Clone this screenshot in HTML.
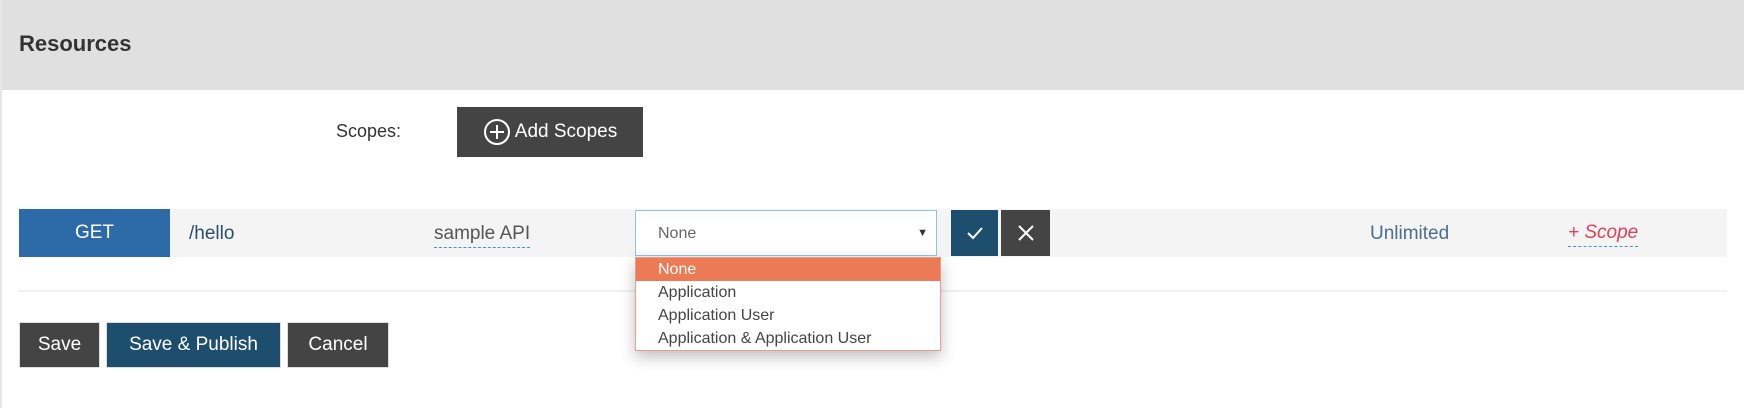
<!DOCTYPE html>
<html><head><style>
*{box-sizing:border-box;margin:0;padding:0}
body{width:1744px;height:408px;background:#fff;font-family:"Liberation Sans",sans-serif;position:relative;overflow:hidden}
.a{position:absolute}
.hdr{left:0;top:0;width:1744px;height:90px;background:#e0e0e0}
.btn{position:absolute;color:#fff;font-size:19px;display:flex;align-items:center;justify-content:center;border:1px solid #ddd}
.dark{background:#444}
.navy{background:#1d4e6e}
.dd div{height:23px;line-height:23px;padding-left:22px;font-size:16px;color:#444}
</style></head><body>
<div class="a hdr"></div>
<div class="a" style="left:0;top:0;width:2px;height:408px;background:#e6e6e6"></div>
<div class="a" style="left:19px;top:31px;font-size:22px;font-weight:bold;color:#333">Resources</div>
<div class="a" style="left:336px;top:121px;font-size:18px;color:#333">Scopes:</div>
<div class="btn dark" style="left:457px;top:107px;width:186px;height:50px;border:none"><svg width="28" height="28" viewBox="0 0 28 28" style="margin-right:4px"><circle cx="14" cy="14" r="12" fill="none" stroke="#fff" stroke-width="2"/><path d="M14 7v14M7 14h14" stroke="#fff" stroke-width="2"/></svg>Add Scopes</div>
<div class="a" style="left:19px;top:209px;width:1708px;height:48px;background:#f4f4f4"></div>
<div class="btn" style="left:19px;top:209px;width:151px;height:48px;background:#2d6aa8;border:none">GET</div>
<div class="a" style="left:189px;top:223px;font-size:19px;color:#2a4e6e">/hello</div>
<div class="a" style="left:434px;top:223px;font-size:19px;color:#555;border-bottom:1px dashed #4a90c8;padding-bottom:2px">sample API</div>
<div class="a" style="left:635px;top:210px;width:302px;height:46px;background:#fff;border:1px solid #8ec3ea;font-size:16px;color:#666;padding:14px 0 0 22px">None<span style="position:absolute;right:8px;top:16px;font-size:11px;color:#333">▼</span></div>
<div class="btn navy" style="left:951px;top:210px;width:47px;height:46px;border:none"><svg width="20" height="20" viewBox="0 0 20 20"><path d="M3 10l5 5 9-10" fill="none" stroke="#fff" stroke-width="2"/></svg></div>
<div class="btn dark" style="left:1001px;top:210px;width:49px;height:46px;border:none"><svg width="20" height="20" viewBox="0 0 20 20"><path d="M3 3l14 14M17 3L3 17" stroke="#fff" stroke-width="2"/></svg></div>
<div class="a" style="left:1370px;top:223px;font-size:19px;color:#4a6f8e">Unlimited</div>
<div class="a" style="left:1568px;top:222px;font-size:19px;color:#e0405a;font-style:italic;border-bottom:1px dashed #4a90c8;padding-bottom:2px">+ Scope</div>
<div class="a" style="left:19px;top:290px;width:1708px;height:2px;background:#f0f0f0"></div>
<div class="btn dark" style="left:19px;top:322px;width:81px;height:46px">Save</div>
<div class="btn navy" style="left:106px;top:322px;width:175px;height:46px">Save &amp; Publish</div>
<div class="btn dark" style="left:287px;top:322px;width:102px;height:46px">Cancel</div>
<div class="a dd" style="left:635px;top:257px;width:306px;height:94px;background:#fff;border:1px solid #e0a090;box-shadow:0 6px 14px rgba(0,0,0,.25)">
<div style="background:#ec7a55;color:#fff">None</div><div>Application</div><div>Application User</div><div>Application &amp; Application User</div></div>
</body></html>
